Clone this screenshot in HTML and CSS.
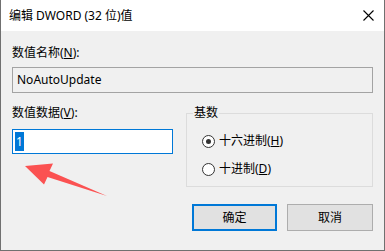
FILE: index.html
```html
<!DOCTYPE html>
<html lang="zh-CN">
<head>
    <meta charset="UTF-8">
    <meta name="viewport" content="width=device-width, initial-scale=1.0">
    <title>编辑 DWORD (32 位)值</title>
    <link rel="stylesheet" href="styles.css">
</head>
<body>

    <div class="window">
        <!-- Title bar -->
        <div class="titlebar">
            <span class="title">编辑 DWORD (32 位)值</span>
            <svg class="close" width="11" height="11" viewBox="0 0 11 11">
                <path d="M0.5 0.5 L10.5 10.5 M10.5 0.5 L0.5 10.5" stroke="#000" stroke-width="1.1" fill="none"/>
            </svg>
        </div>

        <div class="content">
            <div class="label first">数值名称(<u>N</u>):</div>
            <div class="field readonly">NoAutoUpdate</div>

            <div class="row">
                <div class="left-col">
                    <div class="label">数值数据(<u>V</u>):</div>
                    <div class="field active"><span class="selected">1</span></div>
                </div>

                <fieldset class="group">
                    <legend>基数</legend>
                    <div class="radio checked"><span class="dot"></span>十六进制(<u>H</u>)</div>
                    <div class="radio"><span class="dot"></span>十进制(<u>D</u>)</div>
                </fieldset>
            </div>

            <div class="buttons">
                <div class="btn default">确定</div>
                <div class="btn">取消</div>
            </div>
        </div>

        <!-- Red annotation arrow -->
        <svg class="arrow" width="385" height="251" viewBox="0 0 385 251">
            <polygon points="25,166 53,163.5 49.5,171 107,196 47.5,177 44,184.5" fill="#fb5252"/>
        </svg>
    </div>

</body>
</html>
```

FILE: styles.css
```css
body {
    margin: 0;
    padding: 0;
    background-color: #f0f0f0;
}

.window {
    position: relative;
    width: 385px;
    height: 251px;
    box-sizing: border-box;
    border: 1px solid #707070;
    border-top: none;
    background-color: #f0f0f0;
    font-family: "Noto Sans", "Noto Sans CJK SC", sans-serif;
    font-size: 12px;
    color: #000;
    overflow: hidden;
}

.titlebar {
    height: 31px;
    background-color: #fff;
    display: flex;
    align-items: center;
    justify-content: space-between;
    padding-left: 8px;
}

.title {
    line-height: 16px;
}

.close {
    margin-right: 10px;
    margin-top: -1px;
}

.content {
    padding: 0 11px;
}

.label {
    line-height: 16px;
}

.label.first {
    margin-top: 14px;
}

u {
    text-decoration: underline;
    text-underline-offset: 1px;
}

.field {
    box-sizing: border-box;
    height: 26px;
    margin-top: 6px;
    padding-left: 4px;
    display: flex;
    align-items: center;
    line-height: 16px;
}

.field.readonly {
    background-color: #f0f0f0;
    border: 1px solid #a3a3a3;
}

.field.active {
    height: 25px;
    margin-top: 8px;
    padding-left: 2px;
    background-color: #fff;
    border: 1px solid #0078d7;
}

.selected {
    display: inline-block;
    background-color: #0078d7;
    color: #fff;
    padding: 1px 1px;
    line-height: 17px;
}

.row {
    display: flex;
    margin-top: 12px;
}

.left-col {
    width: 161px;
}

.group {
    flex: 1;
    margin: 0 0 0 13px;
    padding: 0 0 0 15px;
    height: 82px;
    box-sizing: border-box;
    border: 1px solid #dcdcdc;
    min-width: 0;
}

.group legend {
    margin-left: -9px;
    padding: 0 1px;
    line-height: 16px;
}

.radio {
    display: flex;
    align-items: center;
    line-height: 16px;
    margin-top: 12px;
}

.radio + .radio {
    margin-top: 12px;
}

.dot {
    width: 11px;
    height: 11px;
    border: 1px solid #333;
    border-radius: 50%;
    background-color: #fff;
    margin-right: 4px;
    position: relative;
}

.radio.checked .dot::after {
    content: "";
    position: absolute;
    left: 3px;
    top: 3px;
    width: 5px;
    height: 5px;
    border-radius: 50%;
    background-color: #333;
}

.buttons {
    display: flex;
    justify-content: flex-end;
    gap: 10px;
    margin-top: 17px;
}

.btn {
    box-sizing: border-box;
    width: 86px;
    height: 27px;
    display: flex;
    align-items: center;
    justify-content: center;
    background-color: #e1e1e1;
    border: 1px solid #adadad;
    line-height: 16px;
}

.btn.default {
    width: 85px;
    border: 2px solid #0078d7;
}

.arrow {
    position: absolute;
    left: -1px;
    top: 0;
    pointer-events: none;
}
```
